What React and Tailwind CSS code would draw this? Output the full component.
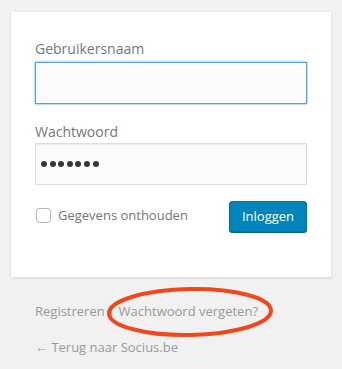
import React from "react";

function App() {
  const dots = [0, 1, 2, 3, 4, 5, 6];
  return (
    <div
      className="relative min-h-[369px] w-full bg-[#f1f1f1] pt-3"
      style={{ fontFamily: '"Open Sans", "Liberation Sans", sans-serif' }}
    >
      <form className="mx-[11px] w-[320px] bg-white px-6 pt-[26px] pb-[45px] shadow-[0_1px_3px_rgba(0,0,0,0.13)]">
        <label className="block text-[14px] leading-[21px] text-[#72777c]">Gebruikersnaam</label>
        <div className="mt-[3px] h-[42px] w-full border border-[#5b9dd9] bg-[#fbfbfb] shadow-[0_0_2px_rgba(30,140,190,0.8)]"></div>

        <label className="mt-[17px] block text-[14px] leading-[21px] text-[#72777c]">Wachtwoord</label>
        <div className="mt-px flex h-[42px] w-full items-center gap-[2.6px] border border-[#ddd] bg-[#fbfbfb] px-[5px] shadow-[inset_0_1px_2px_rgba(0,0,0,0.07)]">
          {dots.map((d) => (
            <span key={d} className="h-[6px] w-[6px] rounded-full bg-[#32373c]"></span>
          ))}
        </div>

        <div className="mt-4 flex items-start justify-between">
          <div className="mt-[5px] flex items-center">
            <span className="ml-px h-[15px] w-[15px] rounded-[3px] border border-[#b4b9be] bg-white"></span>
            <span className="ml-[7px] text-[13px] leading-[19px] text-[#72777c]">Gegevens onthouden</span>
          </div>
          <button
            type="button"
            className="h-[31px] w-[78px] rounded-[3px] border border-[#0073aa] bg-[#0085ba] text-[13px] text-white shadow-[0_1px_0_#006799]"
          >
            Inloggen
          </button>
        </div>
      </form>

      <p className="mt-6 px-[35px] text-[13px] leading-[20px] text-[#999]">
        Registreren | Wachtwoord vergeten?
      </p>
      <p className="mt-4 px-[35px] text-[13px] leading-[20px] text-[#999]">← Terug naar Socius.be</p>

      <svg className="absolute left-[106px] top-[286px]" width="168" height="52" viewBox="0 0 168 52">
        <ellipse cx="84" cy="26" rx="81" ry="23" fill="none" stroke="#f2461b" strokeWidth="4" transform="rotate(-1 84 26)" />
      </svg>
    </div>
  );
}

export default App;
